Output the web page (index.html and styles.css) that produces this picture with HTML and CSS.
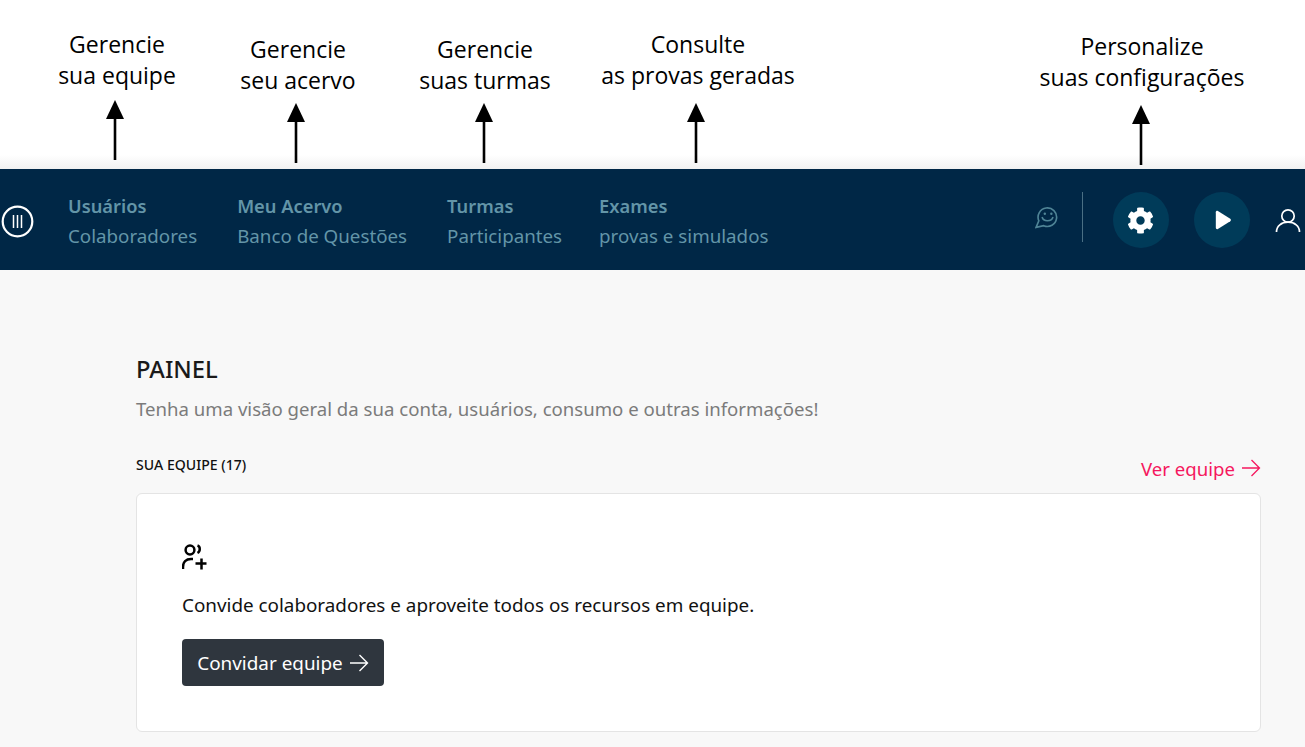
FILE: index.html
```html
<!DOCTYPE html>
<html lang="pt-BR">
<head>
<meta charset="utf-8">
<title>Painel</title>
<link rel="stylesheet" href="styles.css">
</head>
<body>
<header class="annotations">
  <div class="note note-a"><p>Gerencie<br>sua equipe</p></div>
  <div class="note note-b"><p>Gerencie<br>seu acervo</p></div>
  <div class="note note-c"><p>Gerencie<br>suas turmas</p></div>
  <div class="note note-d"><p>Consulte<br>as provas geradas</p></div>
  <div class="note note-e"><p>Personalize<br>suas configurações</p></div>
  <svg class="arrow arrow-a" viewBox="0 0 20 60"><path d="M10 60V18" stroke="#000" stroke-width="2.600" fill="none"/><path d="M1 19 10 0l9 19z" fill="#000"/></svg>
  <svg class="arrow arrow-b" viewBox="0 0 20 60"><path d="M10 60V18" stroke="#000" stroke-width="2.600" fill="none"/><path d="M1 19 10 0l9 19z" fill="#000"/></svg>
  <svg class="arrow arrow-c" viewBox="0 0 20 60"><path d="M10 60V18" stroke="#000" stroke-width="2.600" fill="none"/><path d="M1 19 10 0l9 19z" fill="#000"/></svg>
  <svg class="arrow arrow-d" viewBox="0 0 20 60"><path d="M10 60V18" stroke="#000" stroke-width="2.600" fill="none"/><path d="M1 19 10 0l9 19z" fill="#000"/></svg>
  <svg class="arrow arrow-e" viewBox="0 0 20 60"><path d="M10 60V18" stroke="#000" stroke-width="2.600" fill="none"/><path d="M1 19 10 0l9 19z" fill="#000"/></svg>
</header>
<nav class="navbar">
  <svg class="logo" viewBox="0 0 33 33" fill="none" stroke="#fff"><circle cx="16.500" cy="16.500" r="14.800" stroke-width="2.200"/><path d="M12.500 10v13M16.500 10v13M20.500 10v13" stroke-width="1.500"/></svg>
  <ul class="menu">
    <li class="menu-item"><strong>Usuários</strong><span>Colaboradores</span></li>
    <li class="menu-item"><strong>Meu Acervo</strong><span>Banco de Questões</span></li>
    <li class="menu-item"><strong>Turmas</strong><span>Participantes</span></li>
    <li class="menu-item"><strong>Exames</strong><span>provas e simulados</span></li>
  </ul>
  <div class="actions">
    <svg class="chat" viewBox="0 0 22 22" fill="none" stroke="#4f8496" stroke-width="1.500"><path d="M3.500 14.500A8.500 8.500 0 1 1 8 19L1 20.500z"/><circle cx="9" cy="8" r="1.100" fill="#4f8496" stroke="none"/><circle cx="15" cy="8" r="1.100" fill="#4f8496" stroke="none"/><path d="M6.500 11c1.200 4.600 8.600 4.600 10 0"/></svg>
    <div class="divider"></div>
    <button class="round" aria-label="Configurações"><svg class="gear" viewBox="0 0 512 512" fill="#fff"><path d="M487.4 315.7l-42.6-24.6c4.300-23.200 4.300-47 0-70.200l42.600-24.600c4.900-2.800 7.100-8.600 5.500-14-11.100-35.600-30-67.800-54.700-94.600-3.800-4.100-10-5.100-14.800-2.300L380.800 110c-17.900-15.400-38.500-27.300-60.800-35.100V25.800c0-5.600-3.900-10.500-9.400-11.700-36.700-8.200-74.300-7.800-109.200 0-5.500 1.200-9.400 6.100-9.400 11.700V75c-22.200 7.900-42.800 19.800-60.800 35.100L88.700 85.500c-4.900-2.800-11-1.900-14.800 2.300-24.700 26.700-43.600 58.900-54.700 94.600-1.700 5.400.6 11.200 5.500 14L67.300 221c-4.300 23.200-4.300 47 0 70.200l-42.600 24.600c-4.900 2.800-7.100 8.600-5.500 14 11.100 35.600 30 67.800 54.700 94.600 3.800 4.100 10 5.100 14.800 2.300l42.600-24.600c17.900 15.400 38.500 27.300 60.800 35.100v49.200c0 5.600 3.900 10.500 9.400 11.700 36.700 8.200 74.300 7.800 109.200 0 5.500-1.200 9.400-6.100 9.400-11.700v-49.200c22.200-7.900 42.800-19.800 60.800-35.100l42.600 24.600c4.900 2.800 11 1.900 14.800-2.300 24.700-26.700 43.600-58.900 54.700-94.600 1.500-5.500-.7-11.300-5.600-14.100zM256 336c-44.100 0-80-35.900-80-80s35.900-80 80-80 80 35.900 80 80-35.900 80-80 80z"/></svg></button>
    <button class="round" aria-label="Vídeo"><svg class="play" viewBox="0 0 16 16" fill="#fff"><path d="M3.500 2.300C3.500 1.500 4.300 1 5 1.400l9 5.700c.6.400.6 1.400 0 1.800l-9 5.700c-.7.400-1.500-.1-1.500-.9z"/></svg></button>
    <svg class="user" viewBox="0 0 26 26" fill="none" stroke="#fff" stroke-width="1.700"><circle cx="13" cy="8" r="6.200"/><path d="M1.500 24c0-6 5-9.800 11.500-9.800S24.500 18 24.500 24"/></svg>
  </div>
</nav>
<main class="content">
  <h1 class="title">PAINEL</h1>
  <p class="subtitle">Tenha uma visão geral da sua conta, usuários, consumo e outras informações!</p>
  <div class="section-head">
    <h2 class="section-title">SUA EQUIPE (17)</h2>
    <a class="see-all">Ver equipe <svg viewBox="0 0 20 20" fill="none" stroke="#f5175e" stroke-width="1.300"><path d="M1 10h17.500M10.500 2l8 8-8 8"/></svg></a>
  </div>
  <section class="card">
    <svg class="invite-icon" viewBox="0 0 26 26" fill="none" stroke="#000" stroke-width="2.500"><circle cx="8" cy="6" r="4.400"/><path d="M15.500 1.500c3 1 3 6 0 7.500"/><path d="M1 25v-2c0-5 3-8 8-8h2M13.500 19.500h11M19.500 14.500v11"/></svg>
    <p class="invite-text">Convide colaboradores e aproveite todos os recursos em equipe.</p>
    <button class="invite-btn">Convidar equipe <svg viewBox="0 0 20 20" fill="none" stroke="#fff" stroke-width="1.400"><path d="M1 10h17.500M10.500 2l8 8-8 8"/></svg></button>
  </section>
</main>
</body>
</html>
```
FILE: styles.css
```css
* { box-sizing: border-box; }
html, body { margin: 0; padding: 0; }
body {
  width: 1305px;
  height: 747px;
  overflow: hidden;
  background: #f8f8f8;
  font-family: "Noto Sans", "Open Sans", sans-serif;
}
.annotations {
  position: relative;
  height: 169px;
  background: linear-gradient(#fff 0, #fff 155px, #f1f1f1 169px);
}
.note {
  position: absolute;
  width: 260px;
  text-align: center;
  font-family: "Open Sans", sans-serif;
  font-size: 23px;
  line-height: 31px;
  color: #000;
}
.note p { margin: 0; }
.note-a { left: -13px; top: 29px; }
.note-b { left: 168px; top: 34px; }
.note-c { left: 355px; top: 34px; }
.note-d { left: 568px; top: 29px; }
.note-e { left: 1012px; top: 31px; }
.arrow { position: absolute; width: 20px; height: 60px; }
.arrow-a { left: 105px; top: 100px; }
.arrow-b { left: 286px; top: 103px; }
.arrow-c { left: 474px; top: 103px; }
.arrow-d { left: 686px; top: 103px; }
.arrow-e { left: 1131px; top: 105px; }
.navbar {
  height: 101px;
  background: #002746;
  display: flex;
  align-items: center;
  padding-left: 1px;
}
.logo { width: 33px; height: 33px; flex: none; margin-top: 3px; }
.menu {
  list-style: none;
  margin: 2px 0 0 34px;
  padding: 0;
  display: flex;
  gap: 40px;
}
.menu-item {
  display: flex;
  flex-direction: column;
  gap: 3px;
  color: #6395a8;
  font-size: 18.75px;
  line-height: 27px;
}
.menu-item strong { font-weight: 600; font-size: 18.3px; }
.menu-item:last-child { margin-left: -3px; }
.actions {
  margin-left: auto;
  display: flex;
  align-items: flex-start;
  height: 56px;
  margin-top: 1px;
}
.chat { width: 24px; height: 24px; margin-top: 13px; margin-right: 23px; }
.divider { width: 1px; height: 50px; background: #4a6f84; margin-right: 30px; }
.round {
  width: 56px;
  height: 56px;
  border: 0;
  padding: 0;
  border-radius: 50%;
  background: #003b59;
  display: flex;
  align-items: center;
  justify-content: center;
  margin-right: 25px;
}
.gear { width: 27px; height: 27px; margin-left: -2px; }
.play { width: 22px; height: 22px; margin-left: -1px; }
.user { width: 26px; height: 26px; margin-top: 16px; margin-right: 4px; }
.content { padding: 0 44px 0 136px; }
.title {
  margin: 82px 0 0;
  font-size: 23.8px;
  line-height: 34px;
  font-weight: 500;
  color: #1a1a1a;
}
.subtitle {
  margin: 10px 0 0;
  font-size: 18.6px;
  line-height: 26px;
  color: #7b7b7b;
}
.section-head {
  display: flex;
  justify-content: space-between;
  align-items: flex-start;
  margin-top: 30px;
  height: 41px;
}
.section-title {
  margin: 3px 0 0;
  font-size: 14.1px;
  line-height: 20px;
  font-weight: 500;
  color: #111;
}
.see-all {
  display: flex;
  align-items: center;
  gap: 6px;
  color: #f5175e;
  font-size: 18.6px;
  line-height: 26px;
  margin-top: 4px;
}
.see-all svg { width: 20px; height: 20px; margin-top: -2px; }
.card {
  height: 239px;
  background: #fff;
  border: 1px solid #e4e4e4;
  border-radius: 6px;
  padding: 50px 45px 0;
}
.invite-icon { display: block; width: 26px; height: 26px; }
.invite-text {
  margin: 22px 0 0;
  font-size: 18.85px;
  line-height: 26px;
  color: #111;
}
.invite-btn {
  margin-top: 21px;
  height: 47px;
  width: 202px;
  background: #2f363e;
  border: 0;
  border-radius: 4px;
  color: #fff;
  font: inherit;
  font-size: 18.9px;
  display: flex;
  align-items: center;
  justify-content: center;
  gap: 6px;
}
.invite-btn svg { width: 20px; height: 20px; }
```
